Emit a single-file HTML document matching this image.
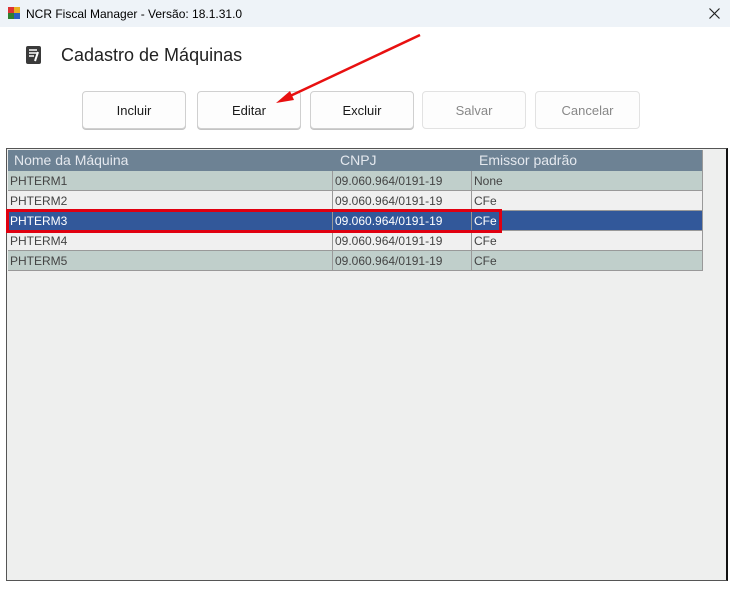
<!DOCTYPE html>
<html><head><meta charset="utf-8"><style>
*{margin:0;padding:0;box-sizing:border-box}
body{width:730px;height:590px;background:#fff;position:relative;overflow:hidden;font-family:"Liberation Sans",sans-serif}
.tb{position:absolute;left:0;top:0;width:730px;height:27px;background:#eef3f8;font-size:12px;color:#000}
.btn{position:absolute;top:91px;height:38px;border:1px solid #d0d0d0;border-radius:4px;background:#fdfdfd;font-size:13px;text-align:center;line-height:37px;color:#1a1a1a;box-shadow:0 1px 0 #c4c4c4}
.dis{color:#888;box-shadow:none;border-color:#e2e2e2}
.grid{position:absolute;left:6px;top:148px;width:722px;height:433px;background:#eeefee;border:1px solid #555;border-right:2px solid #111}
.row{position:absolute;left:1px;width:695px;height:20px;font-size:12px;color:#444;border-bottom:1px solid #999;}
.row span{position:absolute;top:0;height:19px;line-height:20px;padding-left:2px;}
.c2{left:324px;border-left:1px solid #999}
.c3{left:463px;border-left:1px solid #999}
</style></head><body>
<div class="tb">
<div style="position:absolute;left:8px;top:7px;width:12px;height:12px;">
<div style="position:absolute;left:0;top:0;width:6px;height:6px;background:#d33"></div>
<div style="position:absolute;left:6px;top:0;width:6px;height:6px;background:#e9b020"></div>
<div style="position:absolute;left:0;top:6px;width:6px;height:6px;background:#2f7f2f"></div>
<div style="position:absolute;left:6px;top:6px;width:6px;height:6px;background:#2a5fc0"></div></div>
<span style="position:absolute;left:26px;top:7px">NCR Fiscal Manager - Versão: 18.1.31.0</span>
<svg style="position:absolute;left:709px;top:8px" width="11" height="11"><path d="M0.5 0.5L10.5 10.5M10.5 0.5L0.5 10.5" stroke="#222" stroke-width="1.2"/></svg>
</div>
<svg style="position:absolute;left:26px;top:46px" width="16" height="18" viewBox="0 0 16 18"><rect x="0" y="0" width="15" height="18" rx="2" fill="#3a3a3a"/><path d="M3 4h8M3 7h8M3 10h5" stroke="#fff" stroke-width="1.5"/><path d="M12 6l-3 9" stroke="#fff" stroke-width="2"/></svg>
<div style="position:absolute;left:61px;top:45px;font-size:18px;color:#222">Cadastro de Máquinas</div>
<div class="btn" style="left:82px;width:104px">Incluir</div>
<div class="btn" style="left:197px;width:104px">Editar</div>
<div class="btn" style="left:310px;width:104px">Excluir</div>
<div class="btn dis" style="left:422px;width:104px">Salvar</div>
<div class="btn dis" style="left:535px;width:105px">Cancelar</div>
<div class="grid">
<div class="row" style="top:1px;height:21px;background:#6d8294;color:#e4e8ee;font-size:14px;border:none"><span style="left:4px;line-height:21px">Nome da Máquina</span><span style="left:330px;line-height:21px">CNPJ</span><span style="left:469px;line-height:21px">Emissor padrão</span></div>
<div class="row" style="top:22px;background:#c0cfcb"><span>PHTERM1</span><span class="c2">09.060.964/0191-19</span><span class="c3">None</span></div>
<div class="row" style="top:42px;background:#f0f0f0"><span>PHTERM2</span><span class="c2">09.060.964/0191-19</span><span class="c3">CFe</span></div>
<div class="row" style="top:62px;background:#32589a;color:#fff"><span>PHTERM3</span><span class="c2">09.060.964/0191-19</span><span class="c3">CFe</span></div>
<div class="row" style="top:82px;background:#f0f0f0"><span>PHTERM4</span><span class="c2">09.060.964/0191-19</span><span class="c3">CFe</span></div>
<div class="row" style="top:102px;background:#c0cfcb"><span>PHTERM5</span><span class="c2">09.060.964/0191-19</span><span class="c3">CFe</span></div>
</div>
<div style="position:absolute;left:702px;top:150px;width:1px;height:121px;background:#999"></div>
<div style="position:absolute;left:6px;top:209px;width:496px;height:24px;border:3px solid #e00010"></div>
<svg style="position:absolute;left:0;top:0" width="730" height="590"><line x1="420" y1="35" x2="288" y2="97" stroke="#e81010" stroke-width="2.5"/><polygon points="276,103 290,91 294,100" fill="#e81010"/></svg>
</body></html>
